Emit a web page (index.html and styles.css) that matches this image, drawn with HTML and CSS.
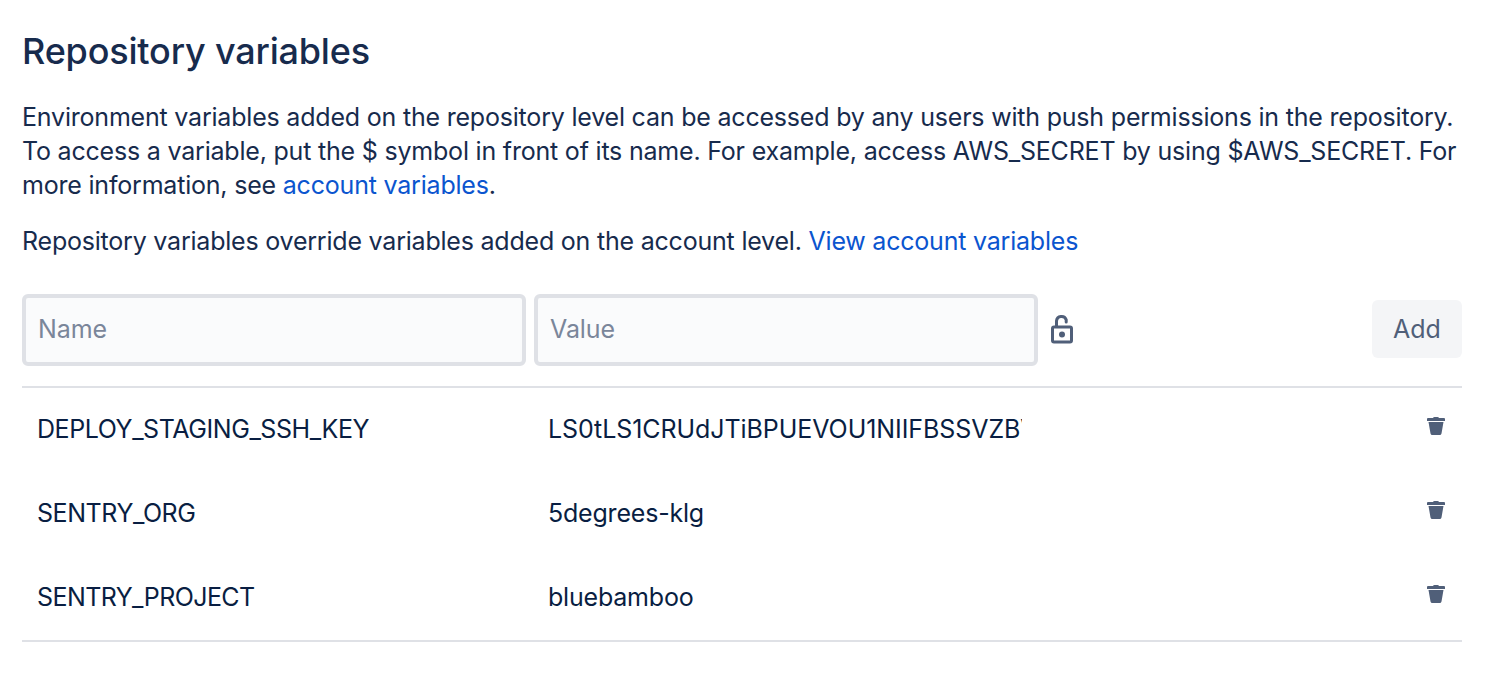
FILE: index.html
```html
<!DOCTYPE html>
<html lang="en">
<head>
<meta charset="utf-8">
<title>Repository variables</title>
<link rel="stylesheet" href="styles.css">
</head>
<body>
<main class="page">
  <h1 class="title">Repository variables</h1>
  <p class="intro">
    <span class="line">Environment variables added on the repository level can be accessed by any users with push permissions in the repository.</span>
    <span class="line">To access a variable, put the $ symbol in front of its name. For example, access AWS_SECRET by using $AWS_SECRET. For</span>
    <span class="line">more information, see <a class="link" href="#">account variables</a>.</span>
  </p>
  <p class="intro note"><span class="line">Repository variables override variables added on the account level. <a class="link" href="#">View account variables</a></span></p>
  <form class="form">
    <input class="field" type="text" placeholder="Name">
    <input class="field" type="text" placeholder="Value">
    <svg class="lock" viewBox="0 0 24 30"><path d="M6.500 12V7a5 5 0 0 1 9.700-1.200V8" fill="none" stroke="#505f79" stroke-width="3" stroke-linecap="round"/><rect x="2.500" y="13" width="19" height="15" rx="1.500" fill="none" stroke="#505f79" stroke-width="3"/><circle cx="12" cy="20.500" r="3" fill="#505f79"/></svg>
    <button class="add" type="button">Add</button>
  </form>
  <ul class="list">
    <li class="row"><span class="name">DEPLOY_STAGING_SSH_KEY</span><span class="value token">LS0tLS1CRUdJTiBPUEVOU1NIIFBSSVZBV</span><svg class="trash" viewBox="0 0 18 20"><path d="M1 2h5q.3-1 1.500-1h3q1.200 0 1.500 1h5q1 0 1 1v2H0V3q0-1 1-1zM1.500 6h15l-2 11.500q-.4 1.500-1.700 1.500H5.200q-1.300 0-1.700-1.500z" fill="#505f79"/></svg></li>
    <li class="row"><span class="name">SENTRY_ORG</span><span class="value">5degrees-klg</span><svg class="trash" viewBox="0 0 18 20"><path d="M1 2h5q.3-1 1.500-1h3q1.200 0 1.500 1h5q1 0 1 1v2H0V3q0-1 1-1zM1.500 6h15l-2 11.500q-.4 1.500-1.700 1.500H5.200q-1.300 0-1.700-1.500z" fill="#505f79"/></svg></li>
    <li class="row"><span class="name project">SENTRY_PROJECT</span><span class="value">bluebamboo</span><svg class="trash" viewBox="0 0 18 20"><path d="M1 2h5q.3-1 1.500-1h3q1.200 0 1.500 1h5q1 0 1 1v2H0V3q0-1 1-1zM1.500 6h15l-2 11.500q-.4 1.500-1.700 1.500H5.200q-1.300 0-1.700-1.500z" fill="#505f79"/></svg></li>
  </ul>
</main>
</body>
</html>
```
FILE: styles.css
```css
* { box-sizing: border-box; }
body { margin: 0; background: #fff; color: #172b4d; font-family: Inter, sans-serif; font-size: 25px; letter-spacing: -0.2px; }
.page { padding: 31px 40px 0 22px; }
.title { margin: 0; font-size: 36px; line-height: 40px; font-weight: 530; letter-spacing: -0.18px; }
.intro { margin: 29px 0 0; line-height: 34px; }
.note { margin-top: 22px; letter-spacing: -0.21px; }
.line { display: block; white-space: nowrap; }
.link { color: #0b55cf; text-decoration: none; }
.form { display: flex; align-items: center; margin: 36px 0 20px; height: 72px; }
.field { width: 504px; height: 72px; margin-right: 8px; padding: 0 12px 2px; border: 4px solid #dfe1e6; border-radius: 6px; background: #fafbfc; font: inherit; letter-spacing: -0.1px; }
.field::placeholder { color: #7a869a; opacity: 1; }
.lock { width: 24px; height: 30px; margin: 0 0 2px 4px; }
.add { width: 90px; height: 58px; margin: 0 0 2px auto; padding: 0; border: 0; border-radius: 6px; background: #f4f5f7; color: #505f79; font: inherit; }
.list { margin: 0; padding: 0 0 0 15px; list-style: none; border-top: 2px solid #dfe1e6; border-bottom: 2px solid #dfe1e6; color: #091e42; }
.row { display: flex; align-items: center; height: 84px; padding-right: 17px; }
.name { width: 511px; padding-bottom: 2px; letter-spacing: -0.43px; }
.project { letter-spacing: -0.57px; }
.value { width: 474px; padding-bottom: 2px; overflow: hidden; white-space: nowrap; }
.token { letter-spacing: -0.07px; }
.trash { width: 18px; height: 20px; margin: -8px 0 0 auto; }
```
